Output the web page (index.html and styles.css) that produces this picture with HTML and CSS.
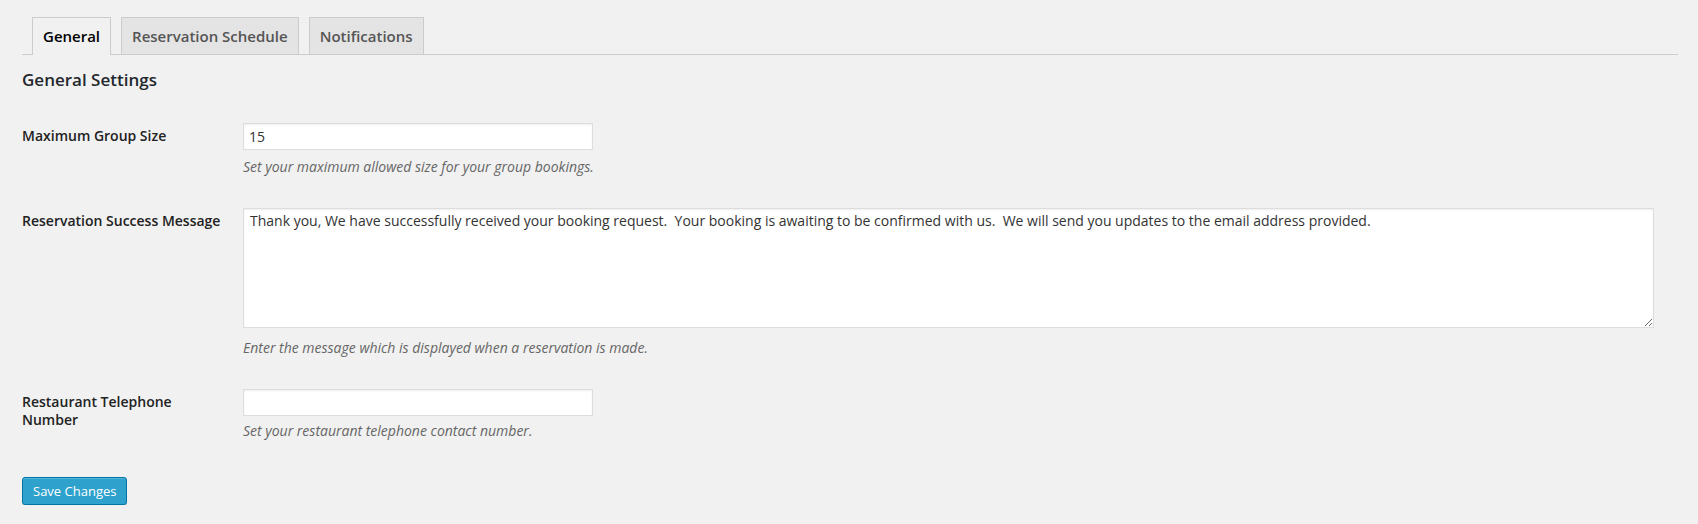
FILE: index.html
```html
<!DOCTYPE html>
<html>
<head>
<meta charset="utf-8">
<link rel="stylesheet" href="styles.css">
</head>
<body>
<div class="wrap">
  <nav class="tabs">
    <a class="tab active">General</a>
    <a class="tab">Reservation Schedule</a>
    <a class="tab">Notifications</a>
  </nav>
  <h2 class="section-title">General Settings</h2>
  <form class="form">
    <div class="row">
      <label class="label">Maximum Group Size</label>
      <div class="field">
        <input class="text-input" type="text" value="15">
        <p class="desc">Set your maximum allowed size for your group bookings.</p>
      </div>
    </div>
    <div class="row">
      <label class="label">Reservation Success Message</label>
      <div class="field">
        <textarea class="textarea">Thank you, We have successfully received your booking request.  Your booking is awaiting to be confirmed with us.  We will send you updates to the email address provided.</textarea>
        <p class="desc desc-area">Enter the message which is displayed when a reservation is made.</p>
      </div>
    </div>
    <div class="row">
      <label class="label">Restaurant Telephone Number</label>
      <div class="field">
        <input class="text-input" type="text" value="">
        <p class="desc desc-tel">Set your restaurant telephone contact number.</p>
      </div>
    </div>
    <div class="submit">
      <button type="button" class="button-primary">Save Changes</button>
    </div>
  </form>
</div>
</body>
</html>
```

FILE: styles.css
```css
html, body {
  margin: 0;
  padding: 0;
  background: #f1f1f1;
}

body {
  font-family: "Open Sans", "Liberation Sans", sans-serif;
  font-size: 13px;
  color: #444;
}

.wrap {
  padding: 0 20px 0 22px;
}

.tabs {
  display: flex;
  gap: 10px;
  padding: 17px 0 0 10px;
  border-bottom: 1px solid #ccc;
}

.tab {
  display: block;
  padding: 6px 10px;
  font-size: 15px;
  line-height: 24px;
  font-weight: 600;
  color: #555;
  background: #e4e4e4;
  border: 1px solid #ccc;
  border-bottom: none;
  text-decoration: none;
}

.tab.active {
  color: #000;
  background: #f1f1f1;
  margin-bottom: -1px;
  padding-bottom: 7px;
}

.section-title {
  margin: 14px 0 0;
  font-size: 17px;
  line-height: 22px;
  font-weight: 600;
  color: #23282d;
}

.form {
  margin-top: 32px;
}

.row {
  display: grid;
  grid-template-columns: 221px 1fr;
  margin-bottom: 31px;
}

.label {
  padding-top: 4px;
  padding-right: 20px;
  font-size: 14px;
  line-height: 18.2px;
  font-weight: 600;
  color: #222;
}

.field {
  display: flex;
  flex-direction: column;
  align-items: flex-start;
}

.text-input {
  box-sizing: border-box;
  width: 350px;
  height: 27px;
  margin: 0;
  padding: 0 5px;
  font-family: "Open Sans", "Liberation Sans", sans-serif;
  font-size: 14px;
  color: #333;
  background: #fff;
  border: 1px solid #ddd;
  box-shadow: inset 0 1px 2px rgba(0, 0, 0, .07);
  outline: none;
}

.textarea {
  box-sizing: border-box;
  display: block;
  width: 1411px;
  height: 120px;
  margin: 0;
  padding: 2px 6px;
  font-family: "Open Sans", "Liberation Sans", sans-serif;
  font-size: 14px;
  line-height: 19px;
  color: #333;
  background: #fff;
  border: 1px solid #ddd;
  box-shadow: inset 0 1px 2px rgba(0, 0, 0, .07);
  outline: none;
}

.desc {
  margin: 6px 0 0;
  font-size: 14px;
  line-height: 21px;
  font-style: italic;
  color: #666;
}

.desc-area {
  margin-top: 9px;
}

.desc-tel {
  margin-top: 4px;
}

.submit {
  padding-top: 5px;
}

.button-primary {
  box-sizing: border-box;
  height: 28px;
  margin: 0;
  padding: 0 10px 1px;
  font-family: "Open Sans", "Liberation Sans", sans-serif;
  font-size: 13px;
  line-height: 26px;
  color: #fff;
  background: #2ea2cc;
  border: 1px solid #0074a2;
  border-radius: 3px;
  box-shadow: inset 0 1px 0 rgba(120, 200, 230, .5), 0 1px 0 rgba(0, 0, 0, .15);
  cursor: pointer;
}
```
